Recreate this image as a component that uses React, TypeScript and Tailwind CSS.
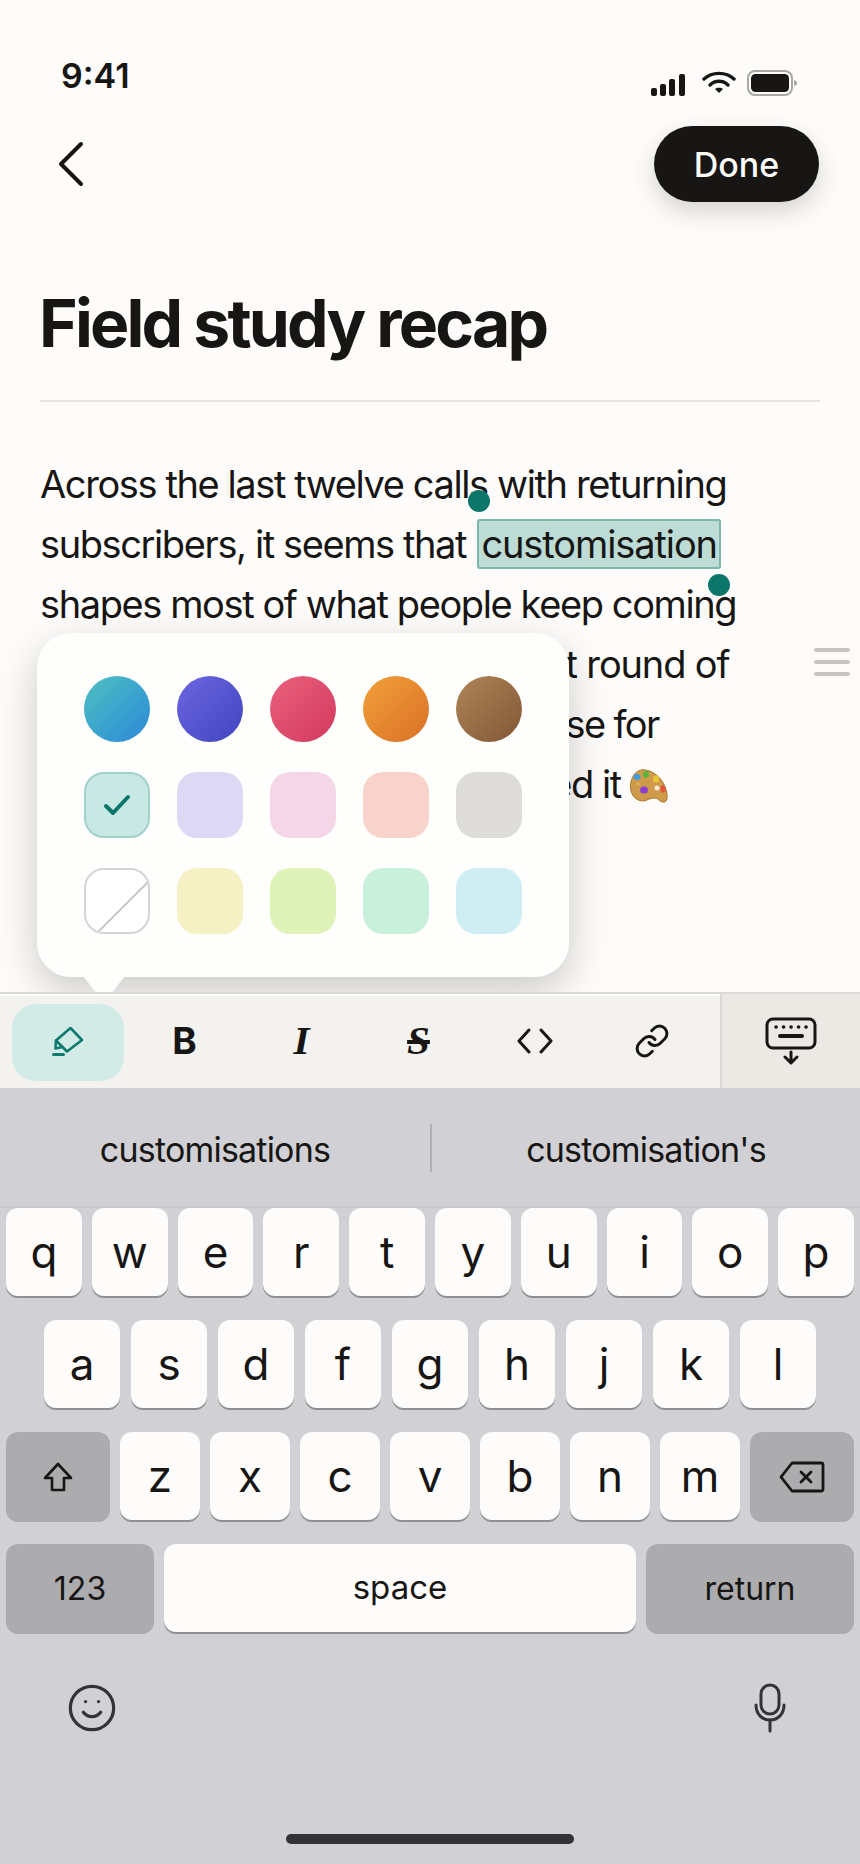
import { Link, Smile } from "lucide-react";

const inter = "font-['Inter','Liberation_Sans',sans-serif]";

const row1 = ["q", "w", "e", "r", "t", "y", "u", "i", "o", "p"];
const row2 = ["a", "s", "d", "f", "g", "h", "j", "k", "l"];
const row3 = ["z", "x", "c", "v", "b", "n", "m"];

const circles = [
  "bg-gradient-to-br from-[#4fc0bf] to-[#2d88d8]",
  "bg-gradient-to-br from-[#6d65e0] to-[#4145c0]",
  "bg-gradient-to-br from-[#ea607c] to-[#d2385e]",
  "bg-gradient-to-br from-[#f2a03a] to-[#da7026]",
  "bg-gradient-to-br from-[#b08558] to-[#815836]",
];

const Key = ({ label, className = "" }: { label: string; className?: string }) => (
  <div
    className={`h-[88px] rounded-[12px] bg-[#fdfcfb] shadow-[0_2px_0_#8f8e91] flex items-center justify-center text-[44px] font-normal text-[#171615] ${className}`}
  >
    {label}
  </div>
);

const Palette = () => (
  <svg width="40" height="34" viewBox="0 0 40 34" className="inline-block align-[-5px] ml-[8px]">
    <path
      d="M12 1C20 0 28 5 33 12c3 5 6 12 5 18-1 4-5 4-8 1-3-3-8-2-12 0C12 34 4 30 2 22 0 13 4 3 12 1z"
      fill="#cf9a4a"
      stroke="#a8752e"
      strokeWidth="1"
    />
    <ellipse cx="8" cy="8" rx="3.5" ry="3" fill="#3f9ae0" />
    <ellipse cx="17" cy="5.500" rx="3" ry="3.200" fill="#57b53e" />
    <ellipse cx="27" cy="10" rx="3" ry="3.500" fill="#e6c733" />
    <circle cx="28" cy="19" r="2.500" fill="#f6ead2" />
    <ellipse cx="34" cy="20" rx="2.500" ry="3.800" fill="#e2533c" />
    <ellipse cx="15" cy="21" rx="4" ry="3.500" fill="#8a3fd0" />
    <ellipse cx="9" cy="15" rx="2" ry="1.500" fill="#e0b060" />
  </svg>
);

export default function App() {
  return (
    <div className={`w-[860px] h-[1864px] flex flex-col bg-[#fdfcfa] overflow-hidden ${inter}`}>
      <div className="relative h-[992px] overflow-hidden">
        {/* status bar */}
        <div className="flex justify-between pt-[56px] pl-[61px] pr-[61px] h-[96px]">
          <span className="text-[34px] leading-[39px] font-semibold text-[#171615]">9:41</span>
          <div className="flex items-start pt-[14px]">
            <svg width="35" height="24" viewBox="0 0 35 24" className="mt-[3px]" fill="#171615">
              <rect x="0" y="15" width="6" height="8" rx="2" />
              <rect x="9" y="11" width="6" height="12" rx="2" />
              <rect x="18" y="6" width="6" height="17" rx="2" />
              <rect x="28" y="1" width="6" height="22" rx="2" />
            </svg>
            <svg width="34" height="24" viewBox="0 0 34 24" className="ml-[16px] mt-[1px]" fill="none" stroke="#171615" strokeWidth="3.4" strokeLinecap="round">
              <path d="M2 8c8-7.500 22-7.500 30 0" />
              <path d="M8 14c5-5 13-5 18 0" />
              <path d="M17 22l-4-4c2-1.600 6-1.600 8 0z" fill="#171615" stroke="none" />
            </svg>
            <svg width="52" height="26" viewBox="0 0 52 26" className="ml-[11px]" fill="none">
              <rect x="1" y="1" width="44" height="24" rx="7" stroke="#a9a8a6" strokeWidth="2" />
              <rect x="4" y="4" width="38" height="18" rx="4.500" fill="#171615" />
              <path d="M47 10c2 .5 3 1.500 3 3s-1 2.500-3 3z" fill="#a9a8a6" />
            </svg>
          </div>
        </div>

        {/* nav */}
        <div className="flex items-center justify-between mt-[30px] pl-[57px] pr-[41px] h-[76px]">
          <svg width="28" height="46" viewBox="0 0 28 46" fill="none" stroke="#171615" strokeWidth="4" strokeLinecap="round" strokeLinejoin="round">
            <path d="M24 3L4 23l20 20" />
          </svg>
          <div className="w-[165px] h-[76px] rounded-full bg-[#171615] flex items-center justify-center text-[34px] font-medium text-[#fdfcfa] shadow-[0_10px_24px_rgba(0,0,0,0.16)]">
            Done
          </div>
        </div>

        <h1 className="mt-[81px] ml-[39px] text-[66px] leading-[80px] font-bold tracking-[-2.8px] text-[#171615]">
          Field study recap
        </h1>
        <div className="mt-[37px] mx-[40px] h-[2px] bg-[#e5e4e1]" />

        {/* note body */}
        <div className="mt-[52px] ml-[40px] text-[38px] leading-[60px] text-[#171615] whitespace-nowrap tracking-[-1.4px]">
          <div>Across the last twelve calls with returning</div>
          <div>
            subscribers, it seems that{" "}
            <span className="ml-[2px] border-2 border-[#7fb6ad] bg-[#bddcd6] rounded-[3px] px-[2px] tracking-[-1.1px]">customisation</span>
          </div>
          <div>shapes most of what people keep coming</div>
          <div className="tracking-[-1.15px]">back to. Compared with our last round of</div>
          <div className="tracking-[-1.65px]">interviews, people cited a new use for</div>
          <div className="tracking-[-1.4px]">
            so they tweaked and then shared it
            <Palette />
          </div>
        </div>

        {/* selection handles */}
        <div className="absolute left-[468px] top-[490px] w-[22px] h-[22px] rounded-full bg-[#0d766b]" />
        <div className="absolute left-[708px] top-[574px] w-[22px] h-[22px] rounded-full bg-[#0d766b]" />

        {/* drag handle */}
        <div className="absolute left-[814px] top-[648px] w-[36px] flex flex-col gap-[8px]">
          <div className="h-[4px] rounded-full bg-[#c6c5c3]" />
          <div className="h-[4px] rounded-full bg-[#c6c5c3]" />
          <div className="h-[4px] rounded-full bg-[#c6c5c3]" />
        </div>

        {/* colour popover */}
        <div className="absolute left-[37px] top-[633px] w-[532px] h-[344px] rounded-[34px] bg-[#fefefd] shadow-[0_14px_40px_rgba(0,0,0,0.2)] pt-[43px] pl-[47px]">
          <div className="grid grid-cols-[repeat(5,66px)] gap-x-[27px] gap-y-[30px]">
            {circles.map((c) => (
              <div key={c} className={`h-[66px] rounded-full ${c}`} />
            ))}
            <div className="h-[66px] rounded-[20px] bg-[#c8e8e3] border-2 border-[#a2d1cb] flex items-center justify-center">
              <svg width="26" height="22" viewBox="0 0 26 22" fill="none" stroke="#0d766b" strokeWidth="4" strokeLinecap="round" strokeLinejoin="round">
                <path d="M2 12l7 7L24 3" />
              </svg>
            </div>
            <div className="h-[66px] rounded-[20px] bg-[#ddd8f3]" />
            <div className="h-[66px] rounded-[20px] bg-[#f4d6e7]" />
            <div className="h-[66px] rounded-[20px] bg-[#f7d3cc]" />
            <div className="h-[66px] rounded-[20px] bg-[#dddcd8]" />
            <div className="h-[66px] rounded-[20px] bg-white border-2 border-[#d6d5d3] overflow-hidden">
              <svg width="62" height="62" viewBox="0 0 62 62" stroke="#c9c8c6" strokeWidth="2">
                <path d="M64 10L10 64" />
              </svg>
            </div>
            <div className="h-[66px] rounded-[20px] bg-[#f6f0c5]" />
            <div className="h-[66px] rounded-[20px] bg-[#dff2b8]" />
            <div className="h-[66px] rounded-[20px] bg-[#c9f0da]" />
            <div className="h-[66px] rounded-[20px] bg-[#cfeef4]" />
          </div>
          <div className="absolute left-[46px] top-[343px] w-[42px] h-[16px] bg-[#fefefd] [clip-path:polygon(0_0,100%_0,70%_100%,30%_100%)]" />
        </div>
      </div>

      {/* format toolbar */}
      <div className="h-[96px] flex border-t-2 border-[#dcdad6]">
        <div className="w-[720px] border-t-2 border-white bg-[#f4f2ef] flex items-center pl-[9px]">
          <div className="w-[117px] flex justify-center">
            <div className="w-[112px] h-[77px] rounded-[24px] bg-[#d3ebe7] flex items-center justify-center">
              <svg width="32" height="30" viewBox="0 0 32 30" fill="none" stroke="#0f7a6e" strokeWidth="2.6" strokeLinejoin="round" strokeLinecap="round">
                <path d="M18.500 1L30 13 15 24.500 4 13.500z" />
                <path d="M4 13.500L3.500 21.500 10.500 20" />
                <path d="M1.500 27.500h10" strokeWidth="3" />
              </svg>
            </div>
          </div>
          <div className="w-[117px] -mt-[3px] text-center text-[37px] font-bold text-[#171615] leading-none">B</div>
          <div className="w-[117px] -mt-[3px] text-center font-['Liberation_Serif',serif] italic font-bold text-[41px] text-[#171615] leading-none">I</div>
          <div className="w-[117px] -mt-[3px] text-center font-['Liberation_Serif',serif] italic line-through font-bold text-[41px] text-[#171615] leading-none">S</div>
          <div className="w-[117px] -mt-[2px] flex justify-center">
            <svg width="36" height="26" viewBox="0 0 36 26" className="-ml-[2px]" fill="none" stroke="#171615" strokeWidth="3" strokeLinecap="round" strokeLinejoin="round">
              <path d="M12 2L2 13l10 11" />
              <path d="M24 2l10 11-10 11" />
            </svg>
          </div>
          <div className="w-[117px] -mt-[2px] flex justify-center">
            <Link size={36} strokeWidth={2} color="#171615" className="-ml-[2px]" />
          </div>
        </div>
        <div className="w-[2px] bg-[#dcdad6]" />
        <div className="flex-1 bg-[#ebe9e4] flex justify-center items-center">
          <svg width="52" height="48" viewBox="0 0 52 48" fill="none" stroke="#171615" strokeWidth="3" strokeLinecap="round" strokeLinejoin="round">
            <rect x="2" y="2" width="48" height="29" rx="6" />
            <path d="M11 10h.1M18.500 10h.1M26 10h.1M33.500 10h.1M41 10h.1" strokeWidth="3.600" />
            <path d="M15 19h22" strokeWidth="4" />
            <path d="M26 35v11M20 40l6 6 6-6" />
          </svg>
        </div>
      </div>

      {/* keyboard */}
      <div className="flex-1 flex flex-col bg-[#d1d0d4] text-[#171615]">
        <div className="h-[118px] flex items-center">
          <div className="w-[430px] text-center text-[34px] pt-[4px] tracking-[-0.8px]">customisations</div>
          <div className="w-[2px] h-[48px] mt-[2px] bg-[#b0afb3]" />
          <div className="flex-1 text-center text-[34px] pt-[4px] tracking-[-0.8px]">customisation's</div>
        </div>
        <div className="h-[2px] bg-[#c9c8cc]" />

        <div className="flex flex-col gap-[24px] px-[6px]">
          <div className="flex gap-[10px]">
            {row1.map((k) => (
              <Key key={k} label={k} className="flex-1" />
            ))}
          </div>
          <div className="flex gap-[11px] justify-center">
            {row2.map((k) => (
              <Key key={k} label={k} className="w-[76px]" />
            ))}
          </div>
          <div className="flex gap-[10px] h-[88px]">
            <div className="w-[104px] h-[90px] rounded-[12px] bg-[#acabae] flex items-center justify-center">
              <svg width="30" height="30" viewBox="0 0 30 30" fill="none" stroke="#171615" strokeWidth="2.6" strokeLinejoin="round">
                <path d="M15 2L2 16h7v12h12V16h7z" />
              </svg>
            </div>
            {row3.map((k) => (
              <Key key={k} label={k} className="w-[80px]" />
            ))}
            <div className="w-[104px] h-[90px] rounded-[12px] bg-[#acabae] flex items-center justify-center">
              <svg width="46" height="32" viewBox="0 0 46 32" fill="none" stroke="#171615" strokeWidth="2.8" strokeLinejoin="round" strokeLinecap="round">
                <path d="M13 2h29a2 2 0 0 1 2 2v24a2 2 0 0 1-2 2H13L2 16z" />
                <path d="M22 11l10 10M32 11L22 21" />
              </svg>
            </div>
          </div>
          <div className="flex gap-[10px] h-[88px]">
            <div className="w-[148px] h-[90px] rounded-[12px] bg-[#acabae] flex items-center justify-center text-[32px]">123</div>
            <Key label="space" className="w-[472px] !text-[33px]" />
            <div className="w-[208px] h-[90px] rounded-[12px] bg-[#acabae] flex items-center justify-center text-[32px]">return</div>
          </div>
        </div>

        <div className="flex justify-between items-center pl-[66px] pr-[74px] mt-[50px]">
          <Smile size={52} strokeWidth={1.5} color="#333336" />
          <svg width="32" height="50" viewBox="0 0 32 50" fill="none" stroke="#333336" strokeWidth="3" strokeLinecap="round">
            <rect x="7" y="2" width="18" height="29" rx="9" />
            <path d="M2 22c0 9 6 15 14 15s14-6 14-15" />
            <path d="M16 37v11" />
          </svg>
        </div>

        <div className="mt-auto mb-[20px] mx-auto w-[288px] h-[10px] rounded-full bg-[#333336]" />
      </div>
    </div>
  );
}
